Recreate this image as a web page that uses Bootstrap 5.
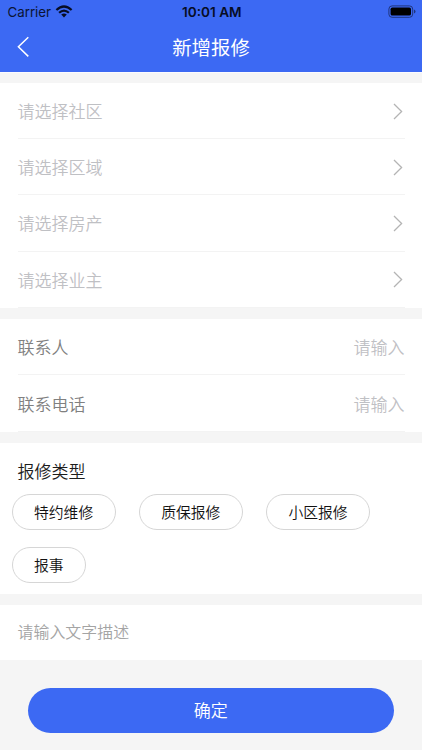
<!DOCTYPE html>
<html lang="zh-CN">
<head>
<meta charset="utf-8">
<meta name="viewport" content="width=device-width, initial-scale=1">
<title>新增报修</title>
<link href="https://cdn.jsdelivr.net/npm/bootstrap@5.3.0/dist/css/bootstrap.min.css" rel="stylesheet">
<style>
body{font-family:Inter,"Noto Sans CJK SC",sans-serif;background:#f5f5f5;font-size:17px;line-height:24px;overflow:hidden}
.cn{font-family:"Noto Sans CJK SC",sans-serif}
main.cn{font-weight:350}
.top-area{background:#3c69f3;height:72px}
.status{height:23px;font-size:13.3px;line-height:23px;padding:0 6px 0 7.5px;color:#0b1433}
.status .side{flex:1 1 0}
.status .side span,.status .clock{padding-top:1px}
.status .clock{font-weight:600;font-size:13.6px;color:#070d25}
.titlebar{height:49px;padding:0 17px}
.titlebar .side{flex:1 1 0}
.titlebar .back-box{padding-top:13px}
.titlebar h1{font-size:19.4px;line-height:48px;font-weight:400}
.panel{background:#fff;margin-top:11.5px}
.first-panel{margin-top:10px}
.header-edge{height:1px;background:#fbfbff}
.form-line{height:56.2px;margin:0 17.5px;border-bottom:1px solid #f3f3f3;padding-top:1px}
.form-line svg{margin-right:1.5px}
.ph{color:#bfc0c4}
.label-text{color:#808080}
.types{height:150.5px;padding:16px 12px 0 11.5px}
.types h2{font-size:17px;line-height:24px;margin:0 0 10.5px 6px;font-weight:350;color:#1c1c1c}
.chips{column-gap:23px;row-gap:17px}
.chip{height:36px;border:1px solid #d6d6d6;padding:0 21.5px;font-size:14.8px;line-height:33px;font-weight:350;color:#111;background:#fff}
.note{height:55.5px;padding:0 17.5px;font-size:15.95px;color:#a4a4a4;line-height:52px;margin-top:11px}
.submit{height:45px;margin:28px 28.5px 0 28px;background:#3c69f3;color:#fff;font-size:17px;line-height:44px;font-weight:350;border:0;padding:0 0 1px}
</style>
<script src="https://cdn.jsdelivr.net/npm/bootstrap@5.3.0/dist/js/bootstrap.bundle.min.js"></script>
</head>
<body>
<header class="top-area">
  <div class="status d-flex align-items-center">
    <div class="side d-flex align-items-center"><span>Carrier</span>
      <svg class="ms-1" width="18" height="13" viewBox="0 0 18 13" fill="none" stroke="#070d25" stroke-width="2.2"><path d="M1.4 5Q9-2 16.6 5M4.1 7.8Q9 3.3 13.9 7.8"/><path d="M6.2 9.6Q9 7.4 11.8 9.6L9 12.5Z" fill="#070d25" stroke="none"/></svg>
    </div>
    <div class="clock">10:01 AM</div>
    <div class="side d-flex justify-content-end">
      <svg width="28" height="13" viewBox="0 0 28 13"><rect x=".9" y=".9" width="23.8" height="11.4" rx="3.2" fill="none" stroke="#20357d"/><rect x="2.6" y="2.6" width="20.4" height="8" rx="1.7" fill="#000"/><path d="M26 4.6q1.5.6 1.5 2t-1.5 2z" fill="#20357d"/></svg>
    </div>
  </div>
  <div class="titlebar d-flex">
    <div class="side back-box d-flex align-items-start"><svg width="13" height="22" viewBox="0 0 13 22" fill="none" stroke="#fff" stroke-width="1.5"><path d="M11.3 1.2 1.4 10.8l9.9 9.6"/></svg></div>
    <h1 class="cn text-white mb-0">新增报修</h1>
    <div class="side"></div>
  </div>
</header>
<div class="header-edge"></div>
<main class="cn">
  <section class="panel first-panel">
    <div class="form-line d-flex justify-content-between align-items-center"><span class="ph">请选择社区</span><svg width="10" height="17" viewBox="0 0 10 17" fill="none" stroke="#b4b4b4" stroke-width="1.3"><path d="m1 1 7.6 7.5L1 16"/></svg></div>
    <div class="form-line d-flex justify-content-between align-items-center"><span class="ph">请选择区域</span><svg width="10" height="17" viewBox="0 0 10 17" fill="none" stroke="#b4b4b4" stroke-width="1.3"><path d="m1 1 7.6 7.5L1 16"/></svg></div>
    <div class="form-line d-flex justify-content-between align-items-center"><span class="ph">请选择房产</span><svg width="10" height="17" viewBox="0 0 10 17" fill="none" stroke="#b4b4b4" stroke-width="1.3"><path d="m1 1 7.6 7.5L1 16"/></svg></div>
    <div class="form-line d-flex justify-content-between align-items-center"><span class="ph">请选择业主</span><svg width="10" height="17" viewBox="0 0 10 17" fill="none" stroke="#b4b4b4" stroke-width="1.3"><path d="m1 1 7.6 7.5L1 16"/></svg></div>
  </section>
  <section class="panel">
    <div class="form-line d-flex justify-content-between align-items-center"><span class="label-text">联系人</span><span class="ph">请输入</span></div>
    <div class="form-line d-flex justify-content-between align-items-center"><span class="label-text">联系电话</span><span class="ph">请输入</span></div>
  </section>
  <section class="panel types">
    <h2>报修类型</h2>
    <div class="chips d-flex flex-wrap">
      <button class="chip rounded-pill">特约维修</button>
      <button class="chip rounded-pill">质保报修</button>
      <button class="chip rounded-pill">小区报修</button>
      <button class="chip rounded-pill">报事</button>
    </div>
  </section>
  <section class="panel note">请输入文字描述</section>
  <div class="d-grid"><button class="submit rounded-pill">确定</button></div>
</main>
</body>
</html>
